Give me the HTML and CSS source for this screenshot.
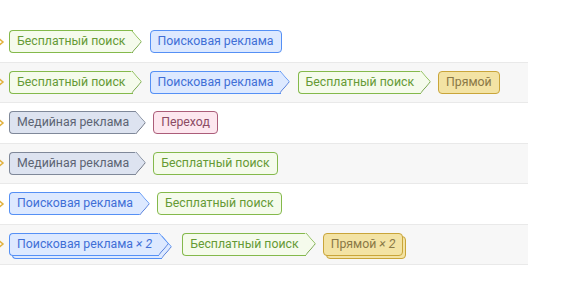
FILE: index.html
```html
<!DOCTYPE html>
<html lang="ru">
<head>
<meta charset="utf-8">
<title>Пути</title>
<link rel="stylesheet" href="styles.css">
</head>
<body>
<div class="table">
  <div class="row">
    <svg class="lead" viewBox="0 0 9 10" width="9" height="10"><polyline points="0.5,2 4,5 0.5,8" /></svg>
    <div class="path">
      <span class="chip arrow green">Бесплатный поиск</span>
      <span class="chip blue">Поисковая реклама</span>
    </div>
  </div>
  <div class="row alt">
    <svg class="lead" viewBox="0 0 9 10" width="9" height="10"><polyline points="0.5,2 4,5 0.5,8" /></svg>
    <div class="path">
      <span class="chip arrow green">Бесплатный поиск</span>
      <span class="chip arrow blue">Поисковая реклама</span>
      <span class="chip arrow green">Бесплатный поиск</span>
      <span class="chip yellow">Прямой</span>
    </div>
  </div>
  <div class="row">
    <svg class="lead" viewBox="0 0 9 10" width="9" height="10"><polyline points="0.5,2 4,5 0.5,8" /></svg>
    <div class="path">
      <span class="chip arrow gray">Медийная реклама</span>
      <span class="chip pink">Переход</span>
    </div>
  </div>
  <div class="row alt">
    <svg class="lead" viewBox="0 0 9 10" width="9" height="10"><polyline points="0.5,2 4,5 0.5,8" /></svg>
    <div class="path">
      <span class="chip arrow gray">Медийная реклама</span>
      <span class="chip green">Бесплатный поиск</span>
    </div>
  </div>
  <div class="row">
    <svg class="lead" viewBox="0 0 9 10" width="9" height="10"><polyline points="0.5,2 4,5 0.5,8" /></svg>
    <div class="path">
      <span class="chip arrow blue">Поисковая реклама</span>
      <span class="chip green">Бесплатный поиск</span>
    </div>
  </div>
  <div class="row alt">
    <svg class="lead" viewBox="0 0 9 10" width="9" height="10"><polyline points="0.5,2 4,5 0.5,8" /></svg>
    <div class="path">
      <span class="stack stack-arrow">
        <span class="chip arrow blue back"></span>
        <span class="chip arrow blue front">Поисковая реклама <i class="times">× 2</i></span>
      </span>
      <span class="chip arrow green">Бесплатный поиск</span>
      <span class="stack">
        <span class="chip yellow back"></span>
        <span class="chip yellow front">Прямой <i class="times">× 2</i></span>
      </span>
    </div>
  </div>
</div>
</body>
</html>
```

FILE: styles.css
```css
html, body {
  margin: 0;
  padding: 0;
  background: #ffffff;
}

body {
  font-family: Roboto, "Liberation Sans", sans-serif;
  font-size: 12.3px;
}

.table {
  width: 528px;
  padding-top: 22px;
}

.row {
  display: flex;
  align-items: center;
  height: 39.5px;
  border-bottom: 1px solid #e9e9e9;
  background: #ffffff;
}

.row.alt {
  background: #f7f7f7;
}

.lead {
  flex: none;
  margin-left: -1px;
  margin-right: 1px;
}

.lead polyline {
  fill: none;
  stroke: #e2b13c;
  stroke-width: 1.5;
}

.path {
  display: flex;
  align-items: center;
  gap: 7px;
}

.chip {
  position: relative;
  z-index: 0;
  display: inline-flex;
  align-items: center;
  box-sizing: border-box;
  height: 23px;
  padding: 0 7px;
  border: 1px solid;
  border-radius: 4px;
  line-height: 21px;
  white-space: nowrap;
}

.chip.arrow {
  border-right: 0;
  border-radius: 4px 0 0 4px;
  padding-right: 7px;
  margin-right: 10px;
}

.chip.arrow::after {
  content: "";
  position: absolute;
  z-index: -1;
  top: 50%;
  right: -8.13px;
  box-sizing: border-box;
  width: 16.26px;
  height: 16.26px;
  border-top: 1px solid;
  border-right: 1px solid;
  border-color: inherit;
  background: inherit;
  border-top-right-radius: 1px;
  transform: translateY(-50%) scaleX(0.87) rotate(45deg);
}

.times {
  margin-left: 3px;
}

.green {
  border-color: #84b94b;
  background-color: #f5fbec;
  color: #659a35;
}

.blue {
  border-color: #5590f5;
  background-color: #dde9ff;
  color: #416fd6;
}

.gray {
  border-color: #7f8899;
  background-color: #dde3f0;
  color: #5c6373;
}

.pink {
  border-color: #ab5d79;
  background-color: #fde7ef;
  color: #8c4b64;
}

.yellow {
  border-color: #c9a53a;
  background-color: #f3e3a4;
  color: #8a7846;
}

.stack {
  position: relative;
  display: inline-flex;
  z-index: 0;
  margin-right: 3px;
}

.stack-arrow {
  margin-right: 6px;
}

.stack .front {
  z-index: 2;
}

.stack .back {
  position: absolute;
  z-index: 1;
  left: 3px;
  top: 3px;
  width: 100%;
  height: 23px;
  margin: 0;
  box-sizing: border-box;
}

.stack-arrow .back {
  width: calc(100% - 10px);
}
```
